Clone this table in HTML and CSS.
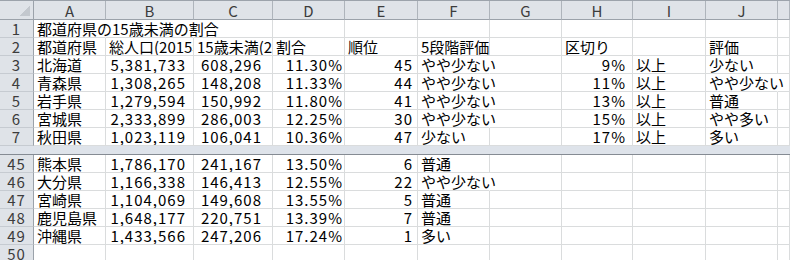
FILE: index.html
```html
<!DOCTYPE html>
<html lang="ja">
<head>
<meta charset="UTF-8">
<title>都道府県の15歳未満の割合</title>
<link rel="stylesheet" href="styles.css">
</head>
<body>
<div class="sheet">
  <!-- top pane: rows 1-7 -->
  <table class="grid">
    <colgroup>
      <col class="w-rh"><col class="w-a"><col class="w-b"><col class="w-c"><col class="w-d"><col class="w-e">
      <col class="w-f"><col class="w-g"><col class="w-h"><col class="w-i"><col class="w-j"><col class="w-k">
    </colgroup>
    <thead>
      <tr>
        <th class="corner"></th>
        <th>A</th><th>B</th><th>C</th><th>D</th><th>E</th><th>F</th><th>G</th><th>H</th><th>I</th><th>J</th><th class="last"></th>
      </tr>
    </thead>
    <tbody>
      <tr><th class="rh">1</th><td class="spill">都道府県の15歳未満の割合</td><td class="spill"></td><td></td><td></td><td></td><td></td><td></td><td></td><td></td><td></td><td></td></tr>
      <tr><th class="rh">2</th><td>都道府県</td><td>総人口(2015年)</td><td>15歳未満(2015年)</td><td>割合</td><td>順位</td><td>5段階評価</td><td></td><td>区切り</td><td></td><td>評価</td><td></td></tr>
      <tr><th class="rh">3</th><td>北海道</td><td class="num pop">5,381,733</td><td class="num kids">608,296</td><td class="num rate">11.30%</td><td class="num rank">45</td><td class="spill">やや少ない</td><td></td><td class="num cut">9%</td><td>以上</td><td>少ない</td><td></td></tr>
      <tr><th class="rh">4</th><td>青森県</td><td class="num pop">1,308,265</td><td class="num kids">148,208</td><td class="num rate">11.33%</td><td class="num rank">44</td><td class="spill">やや少ない</td><td></td><td class="num cut">11%</td><td>以上</td><td class="spill">やや少ない</td><td></td></tr>
      <tr><th class="rh">5</th><td>岩手県</td><td class="num pop">1,279,594</td><td class="num kids">150,992</td><td class="num rate">11.80%</td><td class="num rank">41</td><td class="spill">やや少ない</td><td></td><td class="num cut">13%</td><td>以上</td><td>普通</td><td></td></tr>
      <tr><th class="rh">6</th><td>宮城県</td><td class="num pop">2,333,899</td><td class="num kids">286,003</td><td class="num rate">12.25%</td><td class="num rank">30</td><td class="spill">やや少ない</td><td></td><td class="num cut">15%</td><td>以上</td><td>やや多い</td><td></td></tr>
      <tr><th class="rh">7</th><td>秋田県</td><td class="num pop">1,023,119</td><td class="num kids">106,041</td><td class="num rate">10.36%</td><td class="num rank">47</td><td>少ない</td><td></td><td class="num cut">17%</td><td>以上</td><td>多い</td><td></td></tr>
    </tbody>
  </table>

  <div class="split"></div>

  <!-- bottom pane: rows 45-50 -->
  <table class="grid">
    <colgroup>
      <col class="w-rh"><col class="w-a"><col class="w-b"><col class="w-c"><col class="w-d"><col class="w-e">
      <col class="w-f"><col class="w-g"><col class="w-h"><col class="w-i"><col class="w-j"><col class="w-k">
    </colgroup>
    <tbody>
      <tr><th class="rh">45</th><td>熊本県</td><td class="num pop">1,786,170</td><td class="num kids">241,167</td><td class="num rate">13.50%</td><td class="num rank">6</td><td>普通</td><td></td><td></td><td></td><td></td><td></td></tr>
      <tr><th class="rh">46</th><td>大分県</td><td class="num pop">1,166,338</td><td class="num kids">146,413</td><td class="num rate">12.55%</td><td class="num rank">22</td><td class="spill">やや少ない</td><td></td><td></td><td></td><td></td><td></td></tr>
      <tr><th class="rh">47</th><td>宮崎県</td><td class="num pop">1,104,069</td><td class="num kids">149,608</td><td class="num rate">13.55%</td><td class="num rank">5</td><td>普通</td><td></td><td></td><td></td><td></td><td></td></tr>
      <tr><th class="rh">48</th><td>鹿児島県</td><td class="num pop">1,648,177</td><td class="num kids">220,751</td><td class="num rate">13.39%</td><td class="num rank">7</td><td>普通</td><td></td><td></td><td></td><td></td><td></td></tr>
      <tr><th class="rh">49</th><td>沖縄県</td><td class="num pop">1,433,566</td><td class="num kids">247,206</td><td class="num rate">17.24%</td><td class="num rank">1</td><td>多い</td><td></td><td></td><td></td><td></td><td></td></tr>
      <tr><th class="rh">50</th><td></td><td></td><td></td><td></td><td></td><td></td><td></td><td></td><td></td><td></td><td></td></tr>
    </tbody>
  </table>
</div>
</body>
</html>
```

FILE: styles.css
```css
* {
  box-sizing: border-box;
}

body {
  margin: 0;
  background: #fff;
  color: #000;
  font-family: "Noto Sans CJK JP", "Noto Sans", sans-serif;
  font-size: 15px;
}

.sheet {
  width: 790px;
  height: 260px;
  overflow: hidden;
  border-top: 1px solid #9ca3ab;
}

/* column widths */
.w-rh { width: 34px; }
.w-a { width: 72px; }
.w-b { width: 88px; }
.w-c { width: 79px; }
.w-d { width: 72px; }
.w-e { width: 73px; }
.w-f { width: 72px; }
.w-g { width: 72px; }
.w-h { width: 71px; }
.w-i { width: 73px; }
.w-j { width: 72px; }
.w-k { width: 12px; }

.grid {
  width: 790px;
  table-layout: fixed;
  border-collapse: separate;
  border-spacing: 0;
}

.grid td,
.grid th {
  height: 18px;
  padding: 0 3px;
  border-right: 1px solid #dadcdd;
  border-bottom: 1px solid #dadcdd;
  line-height: 17px;
  white-space: nowrap;
  overflow: hidden;
  text-align: left;
  vertical-align: bottom;
  font-weight: normal;
}

/* text that runs into the empty cell next to it */
.grid td.spill {
  overflow: visible;
  border-right-color: transparent;
}

/* column letters */
.grid thead th {
  height: 19px;
  padding: 0;
  background: #dfe3e8;
  color: #3c3c3c;
  text-align: center;
  vertical-align: middle;
  border-right: 1px solid #aeb4bb;
  border-bottom: 1px solid #9ba2aa;
}

.grid thead th.corner {
  border-right-color: #9ba2aa;
  background: #dfe3e8 linear-gradient(135deg, transparent 50%, #c3c8ce 50%) no-repeat right 3px bottom 3px / 10px 10px;
}

/* row numbers */
.grid th.rh {
  padding: 0;
  background: #dfe3e8;
  color: #3c3c3c;
  text-align: center;
  letter-spacing: 1px;
  border-right: 1px solid #9ba2aa;
  border-bottom: 1px solid #c6cbd1;
}

.num {
  text-align: right !important;
  letter-spacing: 1px;
}

.pop { padding-right: 7px !important; }
.kids { padding-right: 10px !important; }
.rate { padding-right: 1px !important; }
.rank { padding-right: 4px !important; }
.cut { padding-right: 6px !important; }

/* split bar between the two panes */
.split {
  height: 9px;
  background: #dee3ea;
  border-bottom: 1px solid #858b93;
}
```
